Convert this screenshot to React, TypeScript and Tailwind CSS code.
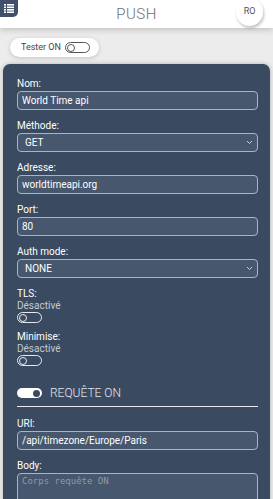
import {useState} from "react";

const Field = ({label, value}: {label: string; value: string}) => (
  <div className="flex flex-col gap-[1px] mb-[10px]">
    <label className="text-[10px] leading-[12px] text-white">{label}</label>
    <input
      readOnly
      value={value}
      className="h-[19px] rounded-[4px] border border-[#aab5c3] bg-[#46576e] px-[4px] text-[10px] text-white outline-none"
    />
  </div>
);

const SelectField = ({label, value}: {label: string; value: string}) => (
  <div className="flex flex-col gap-[1px] mb-[10px]">
    <label className="text-[10px] leading-[12px] text-white">{label}</label>
    <div className="flex h-[19px] items-center justify-between rounded-[4px] border border-[#aab5c3] bg-[#46576e] pl-[7px] pr-[4px] text-[10px] text-white">
      <span>{value}</span>
      <svg width="7" height="5" viewBox="0 0 7 5" fill="none">
        <path d="M1 1l2.5 2.5L6 1" stroke="#c9d0da" strokeWidth="1" />
      </svg>
    </div>
  </div>
);

// petit interrupteur style bootstrap
const Toggle = ({on = false, light = true}: {on?: boolean; light?: boolean}) => {
  if (on) {
    return (
      <div className="flex h-[10px] w-[25px] items-center justify-end rounded-full bg-white pr-[2px]">
        <div className="h-[7px] w-[7px] rounded-full bg-[#394a61]" />
      </div>
    );
  }
  const c = light ? "border-[#e6eaf0]" : "border-[#555]";
  return (
    <div className={`flex h-[11px] w-[25px] items-center rounded-full border ${c} pl-[1px]`}>
      <div className={`h-[8px] w-[8px] rounded-full border ${c}`} />
    </div>
  );
};

const SwitchBlock = ({label}: {label: string}) => (
  <div className="flex flex-col mb-[8px]">
    <span className="text-[10px] leading-[12px] text-white">{label}</span>
    <span className="text-[10px] leading-[12px] text-[#c3cad4]">Désactivé</span>
    <Toggle />
  </div>
);

export default function App() {
  const [tester] = useState(false);

  return (
    <div
      className="flex h-[499px] w-[273px] flex-col overflow-hidden bg-[#ececec]"
      style={{fontFamily: "Roboto, 'Liberation Sans', sans-serif"}}
    >
      <header className="relative z-10 flex h-[28px] shrink-0 items-center justify-center bg-white shadow-[0_2px_6px_rgba(0,0,0,0.18)]">
        <button className="absolute left-0 top-0 flex h-[17px] w-[18px] items-center justify-center rounded-br-[5px] bg-[#3f5068]">
          <svg width="10" height="9" viewBox="0 0 10 9" fill="white">
            <rect x="0" y="0" width="2" height="1.6" />
            <rect x="3" y="0" width="7" height="1.6" />
            <rect x="0" y="2.5" width="2" height="1.6" />
            <rect x="3" y="2.5" width="7" height="1.6" />
            <rect x="0" y="5" width="2" height="1.6" />
            <rect x="3" y="5" width="7" height="1.6" />
            <rect x="0" y="7.4" width="2" height="1.6" />
            <rect x="3" y="7.4" width="7" height="1.6" />
          </svg>
        </button>
        <h1 className="text-[15px] font-light tracking-[0.5px] text-[#6f6f6f]">PUSH</h1>
        <div className="absolute right-[10px] top-[-2px] flex h-[28px] w-[27px] items-center justify-center rounded-full bg-white text-[9px] text-[#555] shadow-[1px_2px_3px_rgba(0,0,0,0.25)]">
          RO
        </div>
      </header>

      <div className="px-[10px] pt-[10px] pb-[7px]">
        <div className="flex h-[19px] w-[89px] items-center gap-[4px] rounded-full bg-white pl-[11px] shadow-[0_1px_4px_rgba(0,0,0,0.18)]">
          <span className="text-[9px] text-[#444]">Tester ON</span>
          <Toggle on={tester} light={false} />
        </div>
      </div>

      <main className="mx-[3px] flex-grow rounded-t-[7px] bg-[#394a61] pl-[14px] pr-[12px] pt-[14px] shadow-[0_0_4px_rgba(0,0,0,0.25)]">
        <Field label="Nom:" value="World Time api" />
        <SelectField label="Méthode:" value="GET" />
        <Field label="Adresse:" value="worldtimeapi.org" />
        <Field label="Port:" value="80" />
        <SelectField label="Auth mode:" value="NONE" />
        <SwitchBlock label="TLS:" />
        <SwitchBlock label="Minimise:" />

        <div className="mt-[18px] flex items-center gap-[8px] border-b border-[#e6eaf0] pb-[4px]">
          <Toggle on />
          <span className="text-[12px] font-light text-[#e3e7ed]">REQUÊTE ON</span>
        </div>

        <div className="mt-[11px]">
          <Field label="URI:" value="/api/timezone/Europe/Paris" />
        </div>

        <div className="flex flex-col gap-[1px]">
          <label className="text-[10px] leading-[12px] text-white">Body:</label>
          <textarea
            readOnly
            placeholder="Corps requête ON"
            className="h-[60px] resize-none rounded-[4px] border border-[#aab5c3] bg-[#46576e] px-[4px] py-[1px] text-[9px] text-white outline-none placeholder:text-[#8f9bab]"
            style={{fontFamily: "'DejaVu Sans Mono', monospace"}}
          />
        </div>
      </main>
    </div>
  );
}
